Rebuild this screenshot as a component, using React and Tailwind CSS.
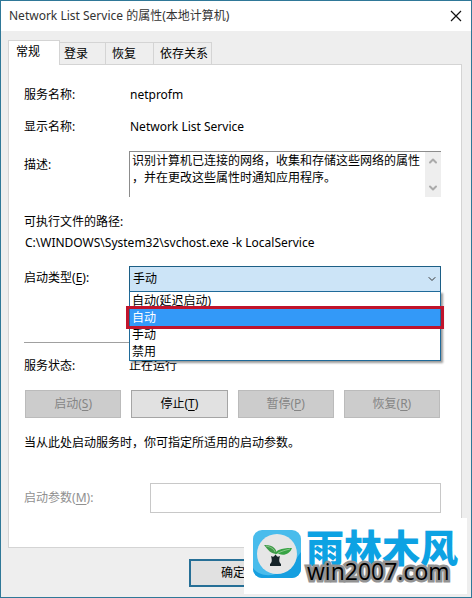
import { useState } from 'react';
import { ChevronDown, ChevronUp } from 'lucide-react';
import clsx from 'clsx';

const tabs = [
  { id: 'general', label: '常规' },
  { id: 'logon', label: '登录' },
  { id: 'recovery', label: '恢复' },
  { id: 'dependencies', label: '依存关系' },
];

const startupTypes = ['自动(延迟启动)', '自动', '手动', '禁用'];

const actions = [
  { label: '启动', hotkey: 'S', disabled: true },
  { label: '停止', hotkey: 'T', disabled: false },
  { label: '暂停', hotkey: 'P', disabled: true },
  { label: '恢复', hotkey: 'R', disabled: true },
];

const description = '识别计算机已连接的网络，收集和存储这些网络的属性\n，并在更改这些属性时通知应用程序。';

function Hotkey({ label, hotkey }) {
  return (
    <>
      {label}(<span className="underline underline-offset-2">{hotkey}</span>)
    </>
  );
}

function TitleBar() {
  return (
    <header className="flex h-[30px] items-center justify-between bg-white pl-2 pr-[9px]">
      <h1 className="text-[#333]">Network List Service 的属性(本地计算机)</h1>
      <button type="button" aria-label="关闭" className="flex size-3 items-center justify-center">
        <svg viewBox="0 0 12 12" className="size-3" fill="none" stroke="#111" strokeWidth="1.2">
          <path d="M1 1l10 10M11 1L1 11" />
        </svg>
      </button>
    </header>
  );
}

function TabBar() {
  return (
    <div role="tablist" className="flex h-[33px] items-end">
      {tabs.map((tab, i) => (
        <button
          key={tab.id}
          type="button"
          role="tab"
          aria-selected={i === 0}
          className={clsx(
            'border-[#d4d4d4] text-left',
            i === 0
              ? 'relative -mb-px h-[25px] w-[52px] border border-b-0 bg-white pb-[2px] pl-[7px]'
              : 'h-[22px] border-r border-t pt-px',
            i === 1 && 'w-[46px] pl-1',
            i === 2 && 'w-12 pl-[6px]',
            i === 3 && 'w-[58px] pl-[6px]'
          )}
        >
          {tab.label}
        </button>
      ))}
    </div>
  );
}

function StartupSelect() {
  const [value, setValue] = useState('手动');

  return (
    <div className="relative">
      <select
        id="startup"
        value={value}
        onChange={(e) => setValue(e.target.value)}
        className="block h-[26px] w-full appearance-none border border-[#1c5f86] bg-[#cce4f7] pl-[3px] outline-none"
      >
        {startupTypes.map((type) => (
          <option key={type}>{type}</option>
        ))}
      </select>
      <ChevronDown size={12} strokeWidth={2} className="pointer-events-none absolute right-[3px] top-[7px] text-[#333]" />
      <ul
        role="listbox"
        aria-label="启动类型"
        className="absolute inset-x-0 top-[25px] z-10 border border-[#1f6a99] bg-white shadow-[2px_2px_2px_rgba(0,0,0,0.4)]"
      >
        {startupTypes.map((type, i) => (
          <li
            key={type}
            role="option"
            aria-selected={i === 1}
            className={clsx('h-[17px] pl-[2px] leading-[17px]', i === 1 && 'bg-[#3399f8] text-white')}
          >
            {type}
          </li>
        ))}
        <li aria-hidden="true" className="pointer-events-none absolute -inset-x-[4px] top-[14px] h-[23px] border-3 border-[#c0142c]" />
      </ul>
    </div>
  );
}

function GeneralPanel() {
  return (
    <main className="border border-[#d4d4d4] bg-white pb-[34px] pl-[15px] pr-5 pt-5">
      <dl className="grid grid-cols-[105px_1fr]">
        <dt className="pb-3">服务名称:</dt>
        <dd className="pl-px">netprofm</dd>
        <dt>显示名称:</dt>
        <dd className="pl-px">Network List Service</dd>
      </dl>

      <div className="mt-[14px] flex">
        <label htmlFor="description" className="w-[105px] shrink-0 pt-1">描述:</label>
        <div className="flex h-[46px] min-w-0 flex-1 border-l border-t border-[#8c8c8c]">
          <textarea
            id="description"
            readOnly
            value={description}
            className="min-w-0 flex-1 resize-none overflow-hidden whitespace-pre bg-transparent pl-[2px] leading-[17px] outline-none"
          />
          <div className="flex w-4 flex-col items-center justify-between bg-[#eee] py-[3px] text-[#aaa]">
            <ChevronUp size={12} strokeWidth={4} />
            <ChevronDown size={12} strokeWidth={4} />
          </div>
        </div>
      </div>

      <p className="mt-[15px]">可执行文件的路径:</p>
      <p className="mt-px pl-px">C:\WINDOWS\System32\svchost.exe -k LocalService</p>

      <div className="mt-[13px] grid grid-cols-[105px_1fr]">
        <label htmlFor="startup" className="pt-[2px]">
          <Hotkey label="启动类型" hotkey="E" />:
        </label>
        <StartupSelect />
      </div>

      <hr className="mt-[50px] border-[#a0a0a0]" />

      <dl className="mt-[13px] grid grid-cols-[105px_1fr]">
        <dt>服务状态:</dt>
        <dd>正在运行</dd>
      </dl>

      <div className="mt-[14px] grid grid-cols-4 gap-[10px] px-px">
        {actions.map((action) => (
          <button
            key={action.hotkey}
            type="button"
            disabled={action.disabled}
            className={clsx(
              'h-7 border',
              action.disabled ? 'border-[#bbb] bg-[#ccc] text-[#858585]' : 'border-[#a5a5a5] bg-[#e1e1e1]'
            )}
          >
            <Hotkey label={action.label} hotkey={action.hotkey} />
          </button>
        ))}
      </div>

      <p className="mt-[15px]">当从此处启动服务时，你可指定所适用的启动参数。</p>

      <div className="mt-[30px] flex items-center">
        <label htmlFor="params" className="w-[126px] shrink-0 text-[#909090]">
          <Hotkey label="启动参数" hotkey="M" />:
        </label>
        <input id="params" type="text" disabled className="h-[30px] min-w-0 flex-1 border border-[#c8c8c8] bg-white" />
      </div>
    </main>
  );
}

function SproutLogo() {
  return (
    <svg viewBox="0 0 48 48" className="size-12 shrink-0">
      <rect width="48" height="48" rx="9" fill="#49bcec" />
      <path d="M0 38C8 49 30 50 48 22V39a9 9 0 0 1-9 9H9a9 9 0 0 1-9-9z" fill="#169fe0" />
      <circle cx="24" cy="24" r="20" fill="#e6e6e6" />
      <path d="M11 15c6 0 12 1 13 9-6 0-9-4-13-9z" fill="#3f9a48" />
      <path d="M22 25c1-5 5-7 17-7-2 6-8 8-13 6-2-1-3 0-4 1z" fill="#37a344" />
      <path d="M25 23c4-2 8-3 12-4M13 16c5 1 8 3 9 6" stroke="#a8d9a4" strokeWidth=".7" fill="none" />
      <path d="M18 26c2 1 3 1 4-1h1c1 2 2 2 4 1-1 4-1 5 0 7l1 1v2H17v-2l1-1c1-2 1-3 0-7z" fill="#17252a" />
    </svg>
  );
}

function Watermark() {
  return (
    <div className="absolute bottom-[3px] right-1 flex h-[76px] w-[223px] bg-white pl-[9px] pt-3">
      <SproutLogo />
      <div className="flex-1 pl-[5px]">
        <p className="whitespace-nowrap font-['Noto_Sans_CJK_SC',sans-serif] text-[38px] font-black leading-8 text-[#0da2e3]">
          雨林木风
        </p>
        <p className="relative -mt-[7px] whitespace-nowrap pl-px font-['Open_Sans',sans-serif] text-[23px] leading-8 text-black [-webkit-text-stroke:5px_#929292] [paint-order:stroke_fill]">
          win2007.com
        </p>
      </div>
    </div>
  );
}

export default function App() {
  return (
    <div className="relative border border-[#2f7898] bg-[#eee] font-['Noto_Sans','Noto_Sans_CJK_SC',sans-serif] text-xs leading-5 text-black">
      <TitleBar />
      <div className="px-[7px] pb-[10px] pr-[9px]">
        <TabBar />
        <GeneralPanel />
        <footer className="mt-[11px] pl-[181px]">
          <button type="button" className="h-7 w-24 border-2 border-[#266f96] bg-[#e1e1e1] pr-2">确定</button>
        </footer>
      </div>
      <Watermark />
    </div>
  );
}
